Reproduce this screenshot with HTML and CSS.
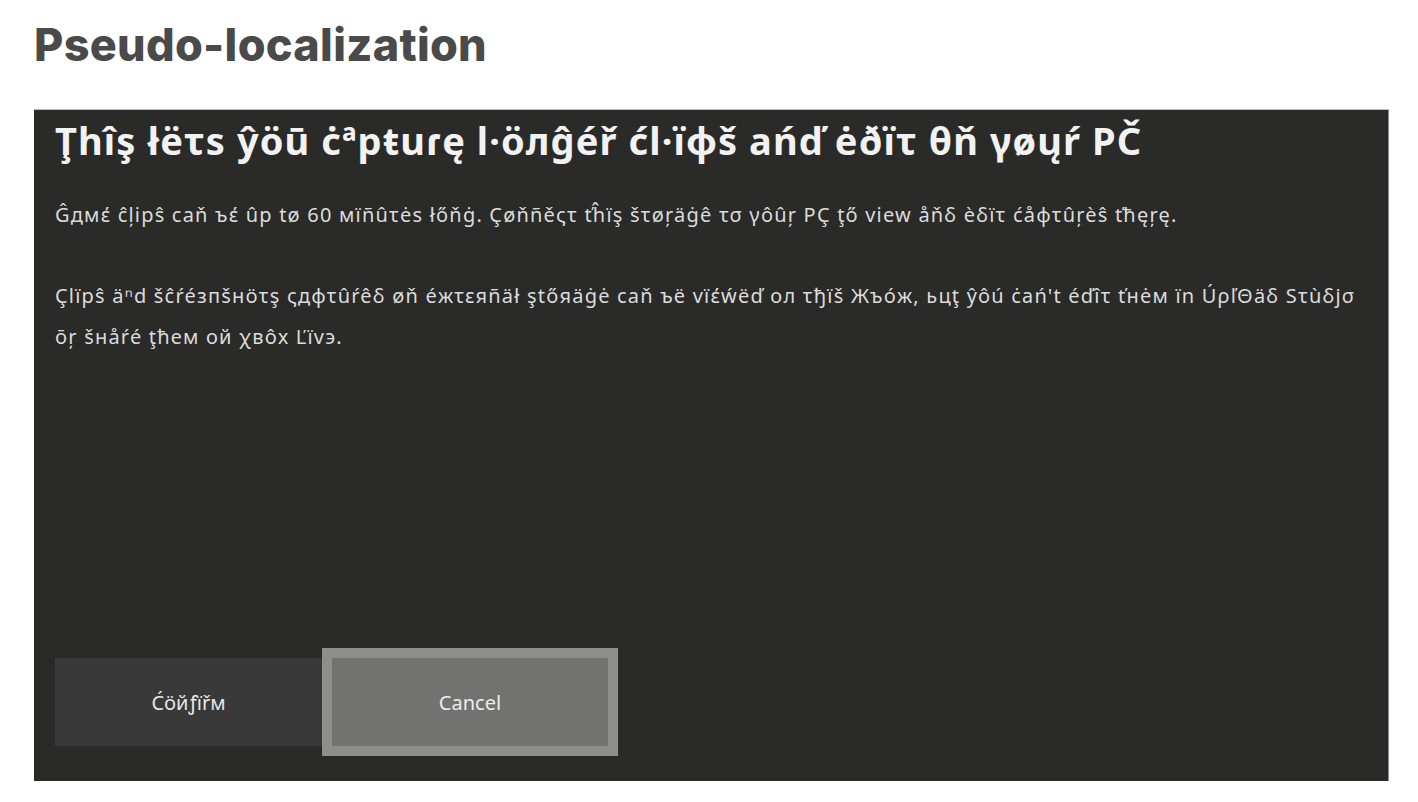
FILE: index.html
```html
<!DOCTYPE html>
<html lang="en">
<head>
<meta charset="utf-8">
<title>Pseudo-localization</title>
<link rel="stylesheet" href="styles.css">
</head>
<body>
<h1 class="page-title">Pseudo-localization</h1>
<section class="dialog">
  <h2 class="dialog-title">Ţhîş łëτs ŷöū ċªpŧuɾę l·öлĝéř ćl·ïφš ańď ėðïτ θň γøųŕ PČ</h2>
  <p class="dialog-text">Ĝдмέ ĉļipŝ caň ъέ ûp tø 60 мïñûτės łőňġ. Çøňñěςτ ťĥïş šτøŗäġê τσ γôûŗ PÇ ţő view åňδ èδïτ ćåφτûŗèŝ ťħęŗę.</p>
  <p class="dialog-text dialog-text-2">Çlïpŝ äⁿd šĉŕéзпšнöτş ςдφτûŕêδ øň éжτεяñäł ştőяäġė caň ъë vïέẃëď ол τђïš Жъóж, ьцţ ŷôú ċаń't éďîτ ťнėм ïn ÚρľΘäδ Sτùδјσ ōŗ šнåŕé ţћем ой χвôх Ľïvэ.</p>
  <div class="dialog-actions">
    <button class="btn btn-confirm">Ćöйƒïřм</button>
    <button class="btn btn-cancel">Cancel</button>
  </div>
</section>
</body>
</html>
```

FILE: styles.css
```css
html, body {
  margin: 0;
  padding: 0;
  background: #ffffff;
}

body {
  font-family: "Noto Sans", "DejaVu Sans", sans-serif;
  width: 1418px;
  height: 802px;
  overflow: hidden;
}

.page-title {
  margin: 0;
  padding: 18px 0 0 34px;
  height: 89px;
  box-sizing: border-box;
  font-family: "Inter", "Noto Sans", sans-serif;
  font-weight: 800;
  font-size: 45px;
  line-height: 54px;
  letter-spacing: 0.3px;
  color: #4a4a4a;
}

.dialog {
  margin: 20px 29px 0 34px;
  height: 672px;
  box-sizing: border-box;
  background: #2a2b29;
  border-top: 1px solid #bcbcbc;
  border-right: 1px solid #8a8a8a;
  padding: 3px 21px 35px 21px;
  display: flex;
  flex-direction: column;
}

.dialog-title {
  margin: 0;
  font-size: 38px;
  font-weight: 700;
  line-height: 54px;
  color: #f2f2f2;
  letter-spacing: 1.1px;
}

.dialog-text {
  margin: 27px 0 0 0;
  font-size: 20px;
  line-height: 41px;
  letter-spacing: 1.2px;
  color: #dcdcdc;
}

.dialog-text-2 {
  margin-top: 40px;
}

.dialog-actions {
  margin-top: auto;
  display: flex;
  gap: 10px;
}

.btn {
  font-family: "Noto Sans", "DejaVu Sans", sans-serif;
  font-size: 20px;
  border: none;
  height: 88px;
  color: #e6e6e6;
  padding: 0;
}

.btn-confirm {
  width: 267px;
  background: #393939;
}

.btn-cancel {
  width: 276px;
  background: #727270;
  outline: 10px solid #8e8e8c;
  color: #ececec;
}
```
